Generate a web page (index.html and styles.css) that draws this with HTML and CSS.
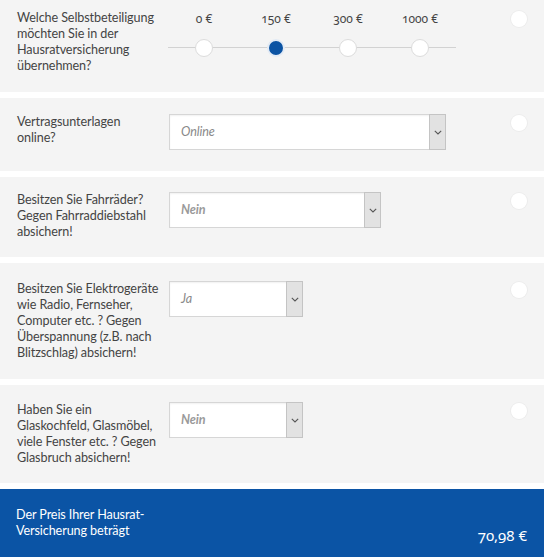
FILE: index.html
```html
<!DOCTYPE html>
<html lang="de">
<head>
<meta charset="utf-8">
<link rel="stylesheet" href="styles.css">
</head>
<body>
<div class="form">
  <div class="row row-first">
    <div class="label">Welche Selbstbeteiligung möchten Sie in der Hausratversicherung übernehmen?</div>
    <div class="control">
      <div class="slider">
        <div class="stop"><span class="amt">0 €</span><span class="dot"></span></div>
        <div class="stop"><span class="amt">150 €</span><span class="dot dot-on"></span></div>
        <div class="stop"><span class="amt">300 €</span><span class="dot"></span></div>
        <div class="stop"><span class="amt">1000 €</span><span class="dot"></span></div>
      </div>
    </div>
    <div class="check"><span class="radio"></span></div>
  </div>

  <div class="row row-two">
    <div class="label">Vertragsunterlagen<br>online?</div>
    <div class="control">
      <div class="select w-long"><span class="val">Online</span><span class="btn"><svg width="8" height="5" viewBox="0 0 8 5"><path d="M0.8 0.8 L4 4 L7.2 0.8" fill="none" stroke="#555" stroke-width="1.1"/></svg></span></div>
    </div>
    <div class="check"><span class="radio"></span></div>
  </div>

  <div class="row row-three">
    <div class="label">Besitzen Sie Fahrräder? Gegen Fahrraddiebstahl absichern!</div>
    <div class="control">
      <div class="select w-mid"><span class="val val-bold">Nein</span><span class="btn"><svg width="8" height="5" viewBox="0 0 8 5"><path d="M0.8 0.8 L4 4 L7.2 0.8" fill="none" stroke="#555" stroke-width="1.1"/></svg></span></div>
    </div>
    <div class="check"><span class="radio"></span></div>
  </div>

  <div class="row row-four">
    <div class="label">Besitzen Sie Elektrogeräte wie Radio, Fernseher, Computer etc. ? Gegen Überspannung (z.B. nach Blitzschlag) absichern!</div>
    <div class="control">
      <div class="select w-short"><span class="val">Ja</span><span class="btn"><svg width="8" height="5" viewBox="0 0 8 5"><path d="M0.8 0.8 L4 4 L7.2 0.8" fill="none" stroke="#555" stroke-width="1.1"/></svg></span></div>
    </div>
    <div class="check"><span class="radio"></span></div>
  </div>

  <div class="row">
    <div class="label">Haben Sie ein Glaskochfeld, Glasmöbel, viele Fenster etc. ? Gegen Glasbruch absichern!</div>
    <div class="control">
      <div class="select w-short"><span class="val val-bold">Nein</span><span class="btn"><svg width="8" height="5" viewBox="0 0 8 5"><path d="M0.8 0.8 L4 4 L7.2 0.8" fill="none" stroke="#555" stroke-width="1.1"/></svg></span></div>
    </div>
    <div class="check"><span class="radio"></span></div>
  </div>

  <div class="total">
    <div class="total-label">Der Preis Ihrer Hausrat-<br>Versicherung beträgt</div>
    <div class="price">70,98 €</div>
  </div>
</div>
</body>
</html>
```
FILE: styles.css
```css
* { box-sizing: border-box; }
html, body { margin: 0; padding: 0; background: #ffffff; }
body {
  font-family: Lato, "Open Sans", sans-serif;
  font-size: 12.6px;
  line-height: 16px;
  color: #444444;
  width: 544px;
  letter-spacing: -0.1px;
}
.form {
  display: flex;
  flex-direction: column;
  gap: 6px;
}
.row {
  background: #f4f4f4;
  display: flex;
  align-items: flex-start;
  padding: 17px 0 17px 17px;
}
.row-first { padding-top: 10px; padding-bottom: 18px; }
.row-two { padding-top: 16px; padding-bottom: 21px; }
.row-three { padding-top: 15px; padding-bottom: 17px; }
.row-four { padding-top: 18px; padding-bottom: 18px; }
.label {
  width: 150px;
  flex: none;
}
.control {
  margin-left: 2px;
  flex: 1;
}
.check {
  width: 33px;
  flex: none;
  display: flex;
  padding-top: 1px;
}
.radio {
  width: 16px;
  height: 16px;
  border-radius: 50%;
  background: #ffffff;
  box-shadow: 0 0 0 1px #ececec;
}
.slider {
  display: grid;
  grid-template-columns: repeat(4, 72px);
  width: 288px;
  background: linear-gradient(#d2d2d2, #d2d2d2) left 37px / 100% 1px no-repeat;
  margin-left: -1px;
}
.stop {
  display: flex;
  flex-direction: column;
  align-items: center;
  gap: 12px;
}
.amt {
  font-family: "Noto Sans", Lato, sans-serif;
  font-feature-settings: "onum" 1;
  font-size: 12px;
  letter-spacing: 0;
  color: #444;
  line-height: 16px;
  padding-top: 1px;
}
.dot {
  width: 18px;
  height: 18px;
  border-radius: 50%;
  background: #ffffff;
  border: 1px solid #dcdcdc;
}
.dot-on {
  background: #0b53a3;
  border: 2px solid #e3ebf5;
}
.select {
  height: 36px;
  display: flex;
  background: #ffffff;
  border: 1px solid #d6d6d6;
  box-shadow: inset 0 1px 2px rgba(0,0,0,0.06);
}
.w-long { width: 277px; }
.w-mid { width: 212px; }
.w-short { width: 134px; }
.val {
  flex: 1;
  padding-left: 11px;
  align-self: center;
  font-style: italic;
  color: #8a8a8a;
}
.val-bold { font-weight: 700; color: #9a9a9a; }
.btn {
  width: 17px;
  flex: none;
  background: #e2e2e2;
  display: flex;
  align-items: center;
  justify-content: center;
  margin: -1px -1px -1px 0;
  border: 1px solid #c4c4c4;
}
.total {
  background: #0b54a5;
  color: #ffffff;
  display: flex;
  justify-content: space-between;
  align-items: flex-start;
  height: 70px;
  padding: 18px 17px 0 16px;
}
.total-label { line-height: 16px; }
.price {
  font-family: "Noto Sans", Lato, sans-serif;
  font-feature-settings: "onum" 1;
  font-size: 15px;
  letter-spacing: 0;
  padding-top: 18px;
  line-height: 20px;
}
```
